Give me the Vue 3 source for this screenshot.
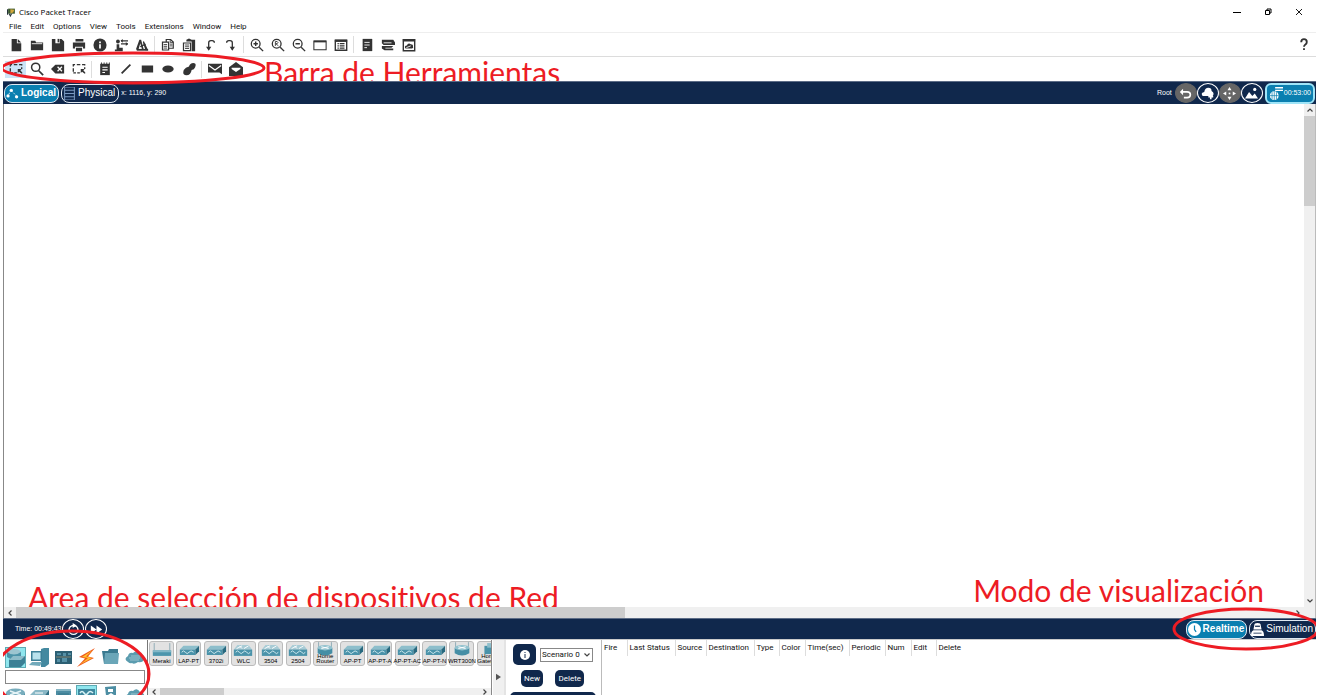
<script setup>
import { ref } from 'vue'

const menus = ['File', 'Edit', 'Options', 'View', 'Tools', 'Extensions', 'Window', 'Help']

const icons = {
  file: '<path d="M3 1h6v5h5v9H3zM10 1l4 4h-4z"/>',
  folder: '<path d="M1 3h5l1 2h8v9H1z"/><path d="M2 6.500h12" stroke="#fff" stroke-width="1"/>',
  save: '<path d="M1 1h11l3 3v11H1z"/><path d="M5 1h5v5H5z" fill="#fff"/><path d="M7.500 1h2v4h-2z"/>',
  print: '<path d="M4 1h9v3H4zM1 5h14v7h-2.500V10h-9v2H1zM4.500 11h7v4h-7z"/>',
  info: '<circle cx="8" cy="8" r="7.500"/><path d="M7 7h2v5H7zM7 4h2v2H7z" fill="#fff"/>',
  user: '<circle cx="4.500" cy="4" r="2.200"/><path d="M3 7h3v4h4v4H1v-2h2zM8 2.500h8v1.500H8zM8 6h8v1.500H8z"/><path d="M10 1v4.500L7.500 3.200zM13.500 4.500v4.500l2.500-2.200z"/>',
  compass: '<path d="M5 2h2l3 11H8L6 6 4 13H1zM10 3l5 11h-3L9 5z"/><path d="M2 13.500h13" stroke="#333" stroke-width="2"/><path d="M6 10l6-3" stroke="#333" stroke-width="1.500"/>',
  copy: '<path d="M1.700 4.700h7v9h-7zM6 4V1.700h5l3 3v7H9" fill="#fff" stroke="#333" stroke-width="1.400"/><path d="M3 7.500h4M3 9.500h4M3 11.500h4M10.500 2v3H14M10 7h3M10 9h3" stroke="#333" fill="none"/>',
  paste: '<path d="M5 2l3-1.500L11 2h4v13h-4V4H5z"/><path d="M1.700 5.700h8v8.600h-8z" fill="#fff" stroke="#333" stroke-width="1.400"/><path d="M3.500 8h4.500M3.500 10h4.500M3.500 12h4.500" stroke="#333"/>',
  undo: '<path d="M6.500 13V5.500Q6.500 3 9 3h1.500Q13 3 13 5.500" fill="none" stroke="#333" stroke-width="1.500"/><path d="M3.500 10h6l-3 4.500z"/>',
  redo: '<path d="M3 5.500Q3 3 5.500 3H7q2.500 0 2.500 2.500V13" fill="none" stroke="#333" stroke-width="1.500"/><path d="M6.500 10h6l-3 4.500z"/>',
  zoomIn: '<circle cx="6.500" cy="6.500" r="5" fill="none" stroke="#333" stroke-width="1.500"/><path d="M10.500 10.500L15 15M4 6.500h5M6.500 4v5" stroke="#333" stroke-width="1.600"/>',
  zoomReset: '<circle cx="6.500" cy="6.500" r="5" fill="none" stroke="#333" stroke-width="1.500"/><path d="M10.500 10.500L15 15" stroke="#333" stroke-width="1.600"/><path d="M5 9V4h2l1 1.300L7 6.500H5.500L8.500 9" fill="none" stroke="#333"/>',
  zoomOut: '<circle cx="6.500" cy="6.500" r="5" fill="none" stroke="#333" stroke-width="1.500"/><path d="M10.500 10.500L15 15M4 6.500h5" stroke="#333" stroke-width="1.600"/>',
  frame: '<path d="M1 3.500h14v10H1z" fill="#fff" stroke="#333" stroke-width="1.200"/><path d="M1 3h14v2H1z"/>',
  listBox: '<path d="M1.500 2.500h13v11.500h-13z" fill="#fff" stroke="#333" stroke-width="1.600"/><path d="M1 2h14v2.500H1z"/><path d="M4 6.500h1.500M6.500 6.500H12M4 9h1.500M6.500 9H12M4 11.500h1.500M6.500 11.500H12" stroke="#333" stroke-width="1.300"/>',
  doc: '<path d="M3 1h11v14H3z"/><path d="M5 5h6M5 8h6M5 11h3" stroke="#fff"/>',
  rack: '<path d="M1 2h13l2 3v3H3L1 6zM1 9h13l-2 2H5v1h9v2H4l-3-2z"/><path d="M3 5.500h9" stroke="#fff"/>',
  cloudBox: '<path d="M1.500 2h13v12.500h-13z" fill="#fff" stroke="#333" stroke-width="1.600"/><path d="M1 1h14v3H1zM4 12q-2-3 1.500-3.500Q7 5 10 7q3 0 2.500 2.500 1 2-1 2.500z"/><path d="M5 11l5-2" stroke="#fff"/>',
  select: '<path d="M1.500 11V3h13v5" fill="none" stroke="#333" stroke-width="1.500" stroke-dasharray="4 2"/><path d="M1.500 12.500h8" stroke="#333" stroke-width="1.500" stroke-dasharray="3 1.500"/><path d="M10 8h4.500l-1.500 1.500 2.500 3-1 1-3-2.500-1.500 1.500z"/>',
  search: '<circle cx="6.500" cy="6" r="4.700" fill="none" stroke="#333" stroke-width="1.700"/><path d="M10 10l5 5" stroke="#333" stroke-width="2"/>',
  erase: '<path d="M0 8l5-5h10v10H5z"/><path d="M7.500 5.500l5 5M12.500 5.500l-5 5" stroke="#fff" stroke-width="1.500"/>',
  note: '<path d="M2.500 2h11v13h-11z"/><path d="M4 .5v3M7 .5v3M10 .5v3M13 .5v3" stroke="#333"/><path d="M5 6h6M5 9h6M5 12h3" stroke="#fff" stroke-width="1.200"/>',
  line: '<path d="M3 13L13 3" stroke="#333" stroke-width="2"/>',
  rect: '<path d="M2 4h13v8H2z"/>',
  oval: '<ellipse cx="8" cy="8" rx="6.500" ry="4"/>',
  blob: '<path d="M8 5q1-4 5-4t2 5q-1 3-4 3-1 6-6 6t-3-6q2-3 6-4z"/>',
  mailClosed: '<path d="M0 2h16v12l-3-2H0z"/><path d="M1 4l7 5 7-5" fill="none" stroke="#fff" stroke-width="1.400"/>',
  mailOpen: '<path d="M0 6l8-6 8 6v10H0z"/><path d="M3 6.500h10v1.500L8 11.500 3 8z" fill="#fff"/>',
  back: '<path d="M5 2L1 6l4 4V7h5q3 0 3 2.500T10 12H6v2h4q5 0 5-4.500T10 5H5z" fill="#fff"/>',
  cloudAdd: '<path d="M2 11q-3-4 2-5 1-5 5-5t4 4q4 2 1.500 6z" fill="#fff"/><path d="M12 9v6M9 12h6" stroke="#fff" stroke-width="2"/>',
  move: '<path d="M8 0l2.500 4h-5zM8 16l2.500-4h-5zM0 8l4-2.500v5zM16 8l-4-2.500v5z" fill="#fff"/><path d="M7 7h2v2H7z" fill="#fff"/>',
  picture: '<path d="M0 14l5-8 4 5 3-3 4 6z" fill="#fff"/><circle cx="12" cy="3" r="2" fill="#fff"/>',
  dots: '<path d="M2 12l4-8 8 8" fill="none" stroke="#fff" stroke-dasharray="2 1.500"/><circle cx="2.500" cy="11" r="2" fill="#fff"/><circle cx="6.500" cy="4" r="2" fill="#fff"/><circle cx="13" cy="12" r="2" fill="#fff"/>',
  server: '<path d="M2 0h12v16H2zM2 4h12M2 8h12M2 12h12" fill="none" stroke="#7d9cc4" stroke-width="1.200"/>',
  globe: '<circle cx="6" cy="11" r="5" fill="#fff"/><path d="M1 11h10M6 6v10M3.500 7v8M8.500 7v8" stroke="#0a7fb0" stroke-width=".8"/><path d="M7 2h9M7 5h9" stroke="#fff" stroke-width="1.600"/>',
  reload: '<circle cx="8" cy="8.500" r="5.500" fill="none" stroke="#fff" stroke-width="1.800"/><path d="M7 0l5 3-5 3z" fill="#fff"/>',
  forward: '<path d="M1 3l7 5-7 5zM8 3l7 5-7 5z" fill="#fff"/>',
  clock: '<circle cx="8" cy="8" r="8" fill="#fff"/><path d="M8 3v5l2 3" fill="none" stroke="#0a7fb0" stroke-width="1.500"/>',
  sim: '<path d="M4 3q0-3 4-3t4 3l1 5H3z" fill="#fff"/><path d="M5 4h6" stroke="#10284c" stroke-width="1.500"/><path d="M0 16q0-6 3-7h10q3 1 3 7z" fill="#fff"/><path d="M3 12.500h10" stroke="#10284c"/>'
}

const mainTools = [
  ['file', 'folder', 'save', 'print', 'info', 'user', 'compass'],
  ['copy', 'paste', 'undo', 'redo'],
  ['zoomIn', 'zoomReset', 'zoomOut', 'frame', 'listBox'],
  ['doc', 'rack', 'cloudBox']
]
const drawTools = [
  ['select', 'search', 'erase', 'select'],
  ['note', 'line', 'rect', 'oval', 'blob'],
  ['mailClosed', 'mailOpen']
]
const navTools = [
  { icon: 'back', grey: true },
  { icon: 'cloudAdd', grey: false },
  { icon: 'move', grey: true },
  { icon: 'picture', grey: false }
]

const art = {
  network: '<ellipse cx="9" cy="5" rx="7" ry="3" fill="#9cc5d0"/><path d="M2 5v5q7 5 14 0V5q-7 5-14 0z" fill="#4c93a8"/><path d="M4 13l4-4h12v7l-4 4H4z" fill="#3b8095"/><path d="M4 13l4-4h12l-4 4z" fill="#8dbcc9"/>',
  pc: '<path d="M12 2l3-1h5v16l-4 3h-4z" fill="#4489a0"/><path d="M2 4h11v10H2z" fill="#3d7f97"/><path d="M3.500 5.500h8v7h-8z" fill="#b9e2ed"/><path d="M0 18l3-3h10l-2 4z" fill="#72aabb"/>',
  board: '<path d="M2 4h17v13H2z" fill="#2c5f73"/><path d="M4 6h4v2H4zM10 6h3v3h-3zM15 6h3v2h-3zM4 12h3v3H4zM9 11h5v4H9z" fill="#5590a6"/><path d="M3 10h15" stroke="#a8946a" stroke-width=".7"/>',
  bolt: '<path d="M19 1L3 10l6 1.500L1 20l17-9-6-1.500z" fill="#ee5a1c"/><path d="M17 3l-11 7 6 1-8 6.500L16 11l-6-1.500z" fill="#ffc02e"/>',
  folder: '<path d="M2 4h6l1-2h9v15H4z" fill="#3a7a90"/><path d="M5 6h14l-1 11H4z" fill="#6aa6b8"/>',
  cloud: '<path d="M4 15q-5-3 0-6 1-4 5-3 4-4 7 1 5 1 4 5-1 4-6 3-4 3-6 1-2 1-4-1z" fill="#5b9caf"/><path d="M5 11h11M7 9l9 0M6 13h9" stroke="#a9ced8" stroke-width=".8"/>',
  router: '<path d="M1 8v6q9 7 19 0V8z" fill="#3f8399"/><ellipse cx="10.500" cy="8" rx="9.500" ry="4.500" fill="#78adbd"/><path d="M5 6l11 4M16 6L5 10" stroke="#e5f3f6" stroke-width="1.500"/>',
  sw: '<path d="M1 10l5-5h14l-4 5z" fill="#89b8c6"/><path d="M1 10h15v7H1z" fill="#4f93a8"/><path d="M16 10l4-5v7l-4 5z" fill="#2e6e84"/><path d="M6 8h8" stroke="#fff"/>',
  hub: '<path d="M3 4h15v13H3z" fill="#4c8ca2"/><path d="M3 4h15v2H3z" fill="#87b6c4"/><path d="M5 9h11M5 11h11" stroke="#2e6e84" stroke-width=".8"/>',
  wifi: '<path d="M2 4h17v13H2z" fill="#3e879e"/><path d="M4 8q2-3 4 0t4 0 5 0" fill="none" stroke="#d9f4f7" stroke-width="1.500"/>',
  guard: '<path d="M5 2l11-1v18H7z" fill="#4d8ea3"/><path d="M8 4h5v3H8z" fill="#fff"/><path d="M8 10l3-2 3 2-3 2z" fill="#fff"/>'
}
const categories = ['network', 'pc', 'board', 'bolt', 'folder', 'cloud']
const subCategories = ['router', 'sw', 'hub', 'wifi', 'guard', 'cloud']

const shapes = {
  meraki: '<path d="M3.500 1v8M20.500 1v8" stroke="#8aa9b4"/><path d="M2 9h20v6H2z" fill="#4d96ad"/><path d="M2 9h20v2H2z" fill="#82b8c8"/>',
  ap: '<path d="M2 8l4-4h17l-4 4z" fill="#8dbecb"/><path d="M2 8h17v6H2z" fill="#4a93aa"/><path d="M19 8l4-4v6l-4 4z" fill="#27697f"/><path d="M4 11q2-3 4 0t4 0 5 0" fill="none" stroke="#d5edf2" stroke-width="1"/>',
  wlc: '<path d="M2 8l4-5h12l4 5z" fill="#a8cbd5"/><path d="M2 8h20v7H2z" fill="#4a93aa"/><path d="M5 7l6-3M13 7l5-3M8 4l3 3" stroke="#fff"/><path d="M4 11q2-3 4 0t4 0 4 0 4 0" fill="none" stroke="#d5edf2" stroke-width="1"/>',
  home: '<path d="M5 0v8M19 0v8" stroke="#8aa9b4"/><path d="M4 6v6q8 5 16 0V6z" fill="#458ea5"/><ellipse cx="12" cy="6" rx="8" ry="3" fill="#94c3cf"/><path d="M8 5l8 2M16 5L8 7" stroke="#fff"/>',
  gate: '<path d="M7 4h14v9H7z" fill="#4a93aa"/><path d="M10 1h12v5H10z" fill="#8dbecb"/>'
}
const devices = [
  ['Meraki', 'meraki'], ['LAP-PT', 'ap'], ['3702i', 'ap'], ['WLC', 'wlc'], ['3504', 'wlc'], ['2504', 'wlc'],
  ['Home Router', 'home'], ['AP-PT', 'ap'], ['AP-PT-A', 'ap'], ['AP-PT-AC', 'ap'], ['AP-PT-N', 'ap'],
  ['WRT300N', 'home'], ['Home Gateway', 'gate']
]
const columns = [
  ['Fire', 25], ['Last Status', 48], ['Source', 31], ['Destination', 48], ['Type', 25], ['Color', 26],
  ['Time(sec)', 44], ['Periodic', 36], ['Num', 26], ['Edit', 25], ['Delete', 40]
]
const search = ref('')
const scenario = ref('Scenario 0')
</script>

<template>
  <div class="window">
    <header class="titlebar">
      <svg class="logo" viewBox="0 0 16 16"><path d="M2 2h12v9H2z" fill="#3c5a2c" /><path d="M6 3l7 1-2 5-5 1z" fill="#d4a83d" /><path d="M1 3v10M4 11l2 4 2-4" stroke="#26333a" stroke-width="2" fill="none" /></svg>
      <h1>Cisco Packet Tracer</h1>
      <div class="controls">
        <button aria-label="Minimize"><svg viewBox="0 0 8 8"><path d="M0 4.500h8" stroke="#000" /></svg></button>
        <button aria-label="Restore"><svg viewBox="0 0 8 8"><path d="M1.500 2.500h4v4h-4zM3 2V1h4v4H6" fill="none" stroke="#000" /></svg></button>
        <button aria-label="Close"><svg viewBox="0 0 8 8"><path d="M1 1l6 6M7 1L1 7" stroke="#000" stroke-width=".9" /></svg></button>
      </div>
    </header>

    <nav class="menu">
      <button v-for="m in menus" :key="m">{{ m }}</button>
    </nav>

    <div class="toolbar">
      <div v-for="(group, g) in mainTools" :key="g" class="group">
        <button v-for="t in group" :key="t" class="tool" :aria-label="t"><svg viewBox="0 0 16 16" v-html="icons[t]" /></button>
      </div>
      <button class="help" aria-label="Help"><svg viewBox="0 0 8 14"><path d="M1 4.500Q1 1.200 4 1.200t3 3Q7 6 5.500 7T4 9.500" fill="none" stroke="#333" stroke-width="2" /><path d="M3 11h2v2H3z" fill="#333" /></svg></button>
    </div>

    <div class="toolbar draw">
      <div v-for="(group, g) in drawTools" :key="g" class="group">
        <button v-for="(t, i) in group" :key="i" class="tool" :class="{ active: g === 0 && i === 0 }" :aria-label="t"><svg viewBox="0 0 16 16" v-html="icons[t]" /></button>
      </div>
      <p class="note note-tools">Barra de Herramientas</p>
    </div>

    <div class="bar">
      <button class="pill on"><svg viewBox="0 0 16 16" v-html="icons.dots" />Logical</button>
      <button class="pill physical"><svg viewBox="0 0 16 16" v-html="icons.server" />Physical</button>
      <span class="small">x: 1116, y: 290</span>
      <span class="small root">Root</span>
      <button v-for="n in navTools" :key="n.icon" class="round" :class="{ grey: n.grey }" :aria-label="n.icon"><svg viewBox="0 0 16 16" v-html="icons[n.icon]" /></button>
      <button class="timer"><svg viewBox="0 0 16 16" v-html="icons.globe" />00:53:00</button>
      <svg class="ring ring-tools" viewBox="0 0 270 40"><ellipse cx="131" cy="20" rx="131" ry="15" /></svg>
    </div>

    <main class="workspace">
      <div class="canvas">
        <p class="note note-devices">Area de selección de dispositivos de Red</p>
        <p class="note note-mode">Modo de visualización</p>
      </div>
      <div class="vscroll">
        <svg viewBox="0 0 8 8"><path d="M1.500 5.500L4 3l2.500 2.500" /></svg>
        <div class="thumb"></div>
        <svg viewBox="0 0 8 8"><path d="M1.500 2.500L4 5l2.500-2.500" /></svg>
      </div>
      <div class="hscroll">
        <svg viewBox="0 0 8 8"><path d="M5.500 1.500L3 4l2.500 2.500" /></svg>
        <div class="thumb"></div>
        <svg viewBox="0 0 8 8"><path d="M2.500 1.500L5 4 2.500 6.500" /></svg>
      </div>
    </main>

    <div class="bar status">
      <span class="small time">Time: 00:49:43</span>
      <button class="round" aria-label="Power cycle"><svg viewBox="0 0 16 16" v-html="icons.reload" /></button>
      <button class="round" aria-label="Fast forward"><svg viewBox="0 0 16 16" v-html="icons.forward" /></button>
      <button class="pill on realtime"><svg viewBox="0 0 16 16" v-html="icons.clock" />Realtime</button>
      <button class="pill"><svg viewBox="0 0 16 16" v-html="icons.sim" />Simulation</button>
      <svg class="ring ring-devices" viewBox="0 0 160 100"><ellipse cx="69" cy="50" rx="77" ry="43" /></svg>
      <svg class="ring ring-mode" viewBox="0 0 150 50"><ellipse cx="73" cy="25" rx="72" ry="20" /></svg>
    </div>

    <section class="bottom">
      <div class="picker">
        <div class="cats">
          <button v-for="(c, i) in categories" :key="c" :class="{ chosen: i === 0 }" :aria-label="c"><svg viewBox="0 0 21 21" v-html="art[c]" /></button>
        </div>
        <input v-model="search" type="text" aria-label="Search devices" />
        <div class="cats">
          <button v-for="(c, i) in subCategories" :key="c" :class="{ chosen: i === 3 }" :aria-label="c"><svg viewBox="0 0 21 21" v-html="art[c]" /></button>
        </div>
      </div>

      <div class="devices">
        <div class="list">
          <button v-for="d in devices" :key="d[0]"><svg viewBox="0 0 24 16" v-html="shapes[d[1]]" /><span>{{ d[0] }}</span></button>
        </div>
        <div class="hscroll short">
          <svg viewBox="0 0 8 8"><path d="M5.500 1.500L3 4l2.500 2.500" /></svg>
          <div class="thumb"></div>
          <svg viewBox="0 0 8 8"><path d="M2.500 1.500L5 4 2.500 6.500" /></svg>
        </div>
      </div>

      <button class="splitter" aria-label="Collapse"><svg viewBox="0 0 6 8"><path d="M0 0l6 4-6 4z" fill="#555" /></svg></button>

      <div class="scenario">
        <div class="line">
          <button class="info" aria-label="Scenario information"><svg viewBox="0 0 10 10"><circle cx="5" cy="5" r="5" fill="#fff" /><path d="M5 4v4M5 2v1" stroke="#10284c" /></svg></button>
          <div class="combo">
            <select v-model="scenario" aria-label="Scenario"><option>Scenario 0</option></select>
            <svg viewBox="0 0 8 8"><path d="M1.500 2.500L4 5l2.500-2.500" /></svg>
          </div>
        </div>
        <div class="line pair">
          <button>New</button>
          <button>Delete</button>
        </div>
        <button class="wide" aria-label="Toggle PDU list window"></button>
      </div>

      <div class="events">
        <table>
          <colgroup><col v-for="c in columns" :key="c[0]" :style="{ width: c[1] + 'px' }" /></colgroup>
          <thead><tr><th v-for="c in columns" :key="c[0]" scope="col">{{ c[0] }}</th></tr></thead>
        </table>
      </div>
    </section>
  </div>
</template>

<style>
body { margin: 0; background: #fff; overflow: hidden; }
</style>

<style scoped>
.window {
  height: 100vh;
  margin: 0 11px 0 3px;
  display: flex;
  flex-direction: column;
  position: relative;
  overflow: hidden;
  background: #fff;
  color: #111;
  font: 8px/10px Roboto, "Liberation Sans", sans-serif;
}
.window *, .window *::before { box-sizing: border-box; }
button { border: 0; padding: 0; margin: 0; background: none; color: inherit; font: inherit; }
svg { display: block; flex: none; }

.titlebar { flex: none; height: 20px; display: flex; align-items: center; padding: 4px 13px 0 4px; }
.logo { width: 9px; height: 10px; }
h1 { margin: 0 0 0 3px; font: 8px/10px "Open Sans", "Noto Sans", sans-serif; color: #000; }
.controls { margin-left: auto; display: flex; gap: 23px; }
.controls svg { width: 8px; height: 8px; }

.menu { flex: none; height: 13px; display: flex; align-items: center; gap: 9px; padding: 2px 0 0 6px; border-bottom: 1px solid #eee; }

.toolbar { flex: none; height: 24px; display: flex; align-items: center; padding-left: 2px; border-bottom: 1px solid #dcdcdc; position: relative; }
.group { display: flex; }
.group + .group { margin-left: 2px; padding-left: 2px; border-left: 1px solid #ddd; }
.tool { width: 21px; height: 17px; display: flex; align-items: center; justify-content: center; }
.tool svg { width: 14px; height: 14px; fill: #333; }
.tool.active { background: #cce4f7; }
.help { margin-left: auto; padding-right: 8px; }
.help svg { width: 8px; height: 13px; }
.draw { border-bottom: 0; z-index: 1; }

.note { margin: 0; position: absolute; color: #ed1c24; font: 30px/36px Lato, "Open Sans", sans-serif; font-variant-ligatures: none; white-space: nowrap; }
.note-tools { left: 261px; top: -3px; }
.note-devices { left: 24px; bottom: -8px; }
.note-mode { right: 40px; bottom: -1px; }
.ring { position: absolute; z-index: 3; pointer-events: none; overflow: visible; }
.ring ellipse { fill: none; stroke: #ed1c24; stroke-width: 3; }
.ring-tools { left: -1px; top: -34px; width: 270px; height: 40px; }
.ring-devices { left: 0; top: 5px; width: 160px; height: 100px; }
.ring-mode { right: -7px; top: -15px; width: 150px; height: 50px; }

.bar { flex: none; height: 23px; display: flex; align-items: center; position: relative; z-index: 2; background: #10284c; border-top: 1px solid #5c6c86; color: #fff; padding: 0 1px; }
.pill { height: 19px; display: flex; align-items: center; gap: 2px; padding: 0 2px 0 1px; border: 1px solid #dfe8f1; border-radius: 8px; font: 10px/12px "Liberation Sans", Arial, sans-serif; }
.pill + .pill { margin-left: 2px; }
.pill svg { width: 13px; height: 13px; }
.pill.on { background: #0a7fb0; font-weight: bold; }
.physical { padding-right: 3px; }
.small { margin-left: 2px; font: 7px/10px "Liberation Sans", Arial, sans-serif; }
.root { margin: 0 3px 0 auto; }
.round { width: 22px; height: 20px; display: flex; align-items: center; justify-content: center; border: 1px solid #fff; border-radius: 50%; background: #10284c; }
.round.grey { background: #666; border-color: #666; }
.round svg { width: 13px; height: 13px; }
.timer { height: 21px; display: flex; align-items: center; gap: 1px; margin-left: 2px; padding: 0 2px; background: #0a7fb0; border: 2px solid #9fe4f7; border-radius: 6px; font: 7px/10px "Liberation Sans", Arial, sans-serif; }
.timer svg { width: 14px; height: 14px; }
.status { height: 21px; padding-right: 0; }
.status .round + .round { margin-left: 1px; }
.time { margin: 0 1px 0 11px; }
.realtime { margin-left: auto; }

.workspace { flex: 1; min-height: 0; display: grid; grid-template: minmax(0, 1fr) 11px / minmax(0, 1fr) 11px; border-left: 1px solid #888; border-right: 1px solid #bbb; }
.canvas { position: relative; overflow: hidden; background: #fff; }
.vscroll { display: flex; flex-direction: column; align-items: center; background: #f0f0f0; padding: 2px 0; }
.vscroll svg, .hscroll svg, .combo svg { width: 8px; height: 8px; fill: none; stroke: #444; stroke-width: 1.2; }
.vscroll .thumb { width: 100%; height: 18%; margin: 2px 0 auto; background: #cdcdcd; }
.hscroll { grid-column: 1 / -1; display: flex; align-items: center; padding: 0 13px 0 2px; background: #f0f0f0; }
.hscroll .thumb { height: 100%; width: 47%; margin: 0 auto 0 2px; background: #cdcdcd; }

.bottom { flex: none; height: 56px; display: flex; overflow: hidden; border-top: 1px solid #ccc; }
.picker { width: 145px; padding: 7px 2px 0; border-right: 1px solid #777; }
.cats { display: flex; justify-content: space-between; }
.cats button { width: 21px; height: 21px; }
.cats svg { width: 21px; height: 21px; }
.cats .chosen { background: #8fe6ee; outline: 1px solid #5daab4; outline-offset: -1px; }
.picker input { display: block; width: 100%; height: 14px; margin: 2px 0 1px; padding: 0 2px; border: 1px solid #888; background: #fff; font: inherit; }
.devices { width: 344px; display: flex; flex-direction: column; overflow: hidden; border-right: 1px solid #888; }
.list { width: 356px; display: grid; grid-template-columns: repeat(13, 1fr); padding: 1px 0 0 1px; }
.list button { width: 25px; height: 25px; display: flex; flex-direction: column; align-items: center; justify-content: space-between; border: 1px solid #bbb; border-radius: 3px; background: #e2e2e2; color: #000; }
.list svg { width: 22px; height: 15px; margin-bottom: -4px; }
.list span { margin: auto -4px 0; font: 6px/5px "Liberation Sans", Arial, sans-serif; text-align: center; padding-bottom: 1px; }
.short { margin-top: auto; height: 7px; padding: 0 2px; }
.short .thumb { width: 64px; }
.splitter { width: 14px; padding-top: 18px; display: flex; align-items: center; justify-content: center; background: #f0f0f0; border-left: 1px solid #fff; border-right: 2px solid #e4e4e4; }
.splitter svg { width: 5px; height: 8px; }
.scenario { width: 95px; padding: 4px 5px 0 4px; display: flex; flex-direction: column; align-items: stretch; }
.line { display: flex; align-items: center; gap: 4px; padding: 0 3px; }
.scenario button { background: #10284c; color: #fff; border-radius: 5px; }
.info { width: 23px; height: 21px; display: flex; align-items: center; justify-content: center; }
.info svg { width: 10px; height: 10px; }
.combo { position: relative; flex: 1; }
.combo select { appearance: none; display: block; width: 100%; height: 14px; padding: 0 1px; border: 1px solid #888; border-radius: 0; background: #fff; color: #111; font: inherit; }
.combo svg { position: absolute; right: 2px; top: 3px; }
.pair { padding: 5px 12px 5px 11px; justify-content: space-between; }
.pair button { height: 17px; padding: 0 3px; }
.scenario .wide { height: 14px; flex: none; }
.events { flex: 1; border-left: 1px solid #bbb; }
table { border-collapse: collapse; table-layout: fixed; width: 374px; }
th { height: 16px; padding: 0 0 0 2px; border-right: 1px solid #ddd; text-align: left; font-weight: normal; white-space: nowrap; }
th:last-child { border-right: 0; }
</style>
